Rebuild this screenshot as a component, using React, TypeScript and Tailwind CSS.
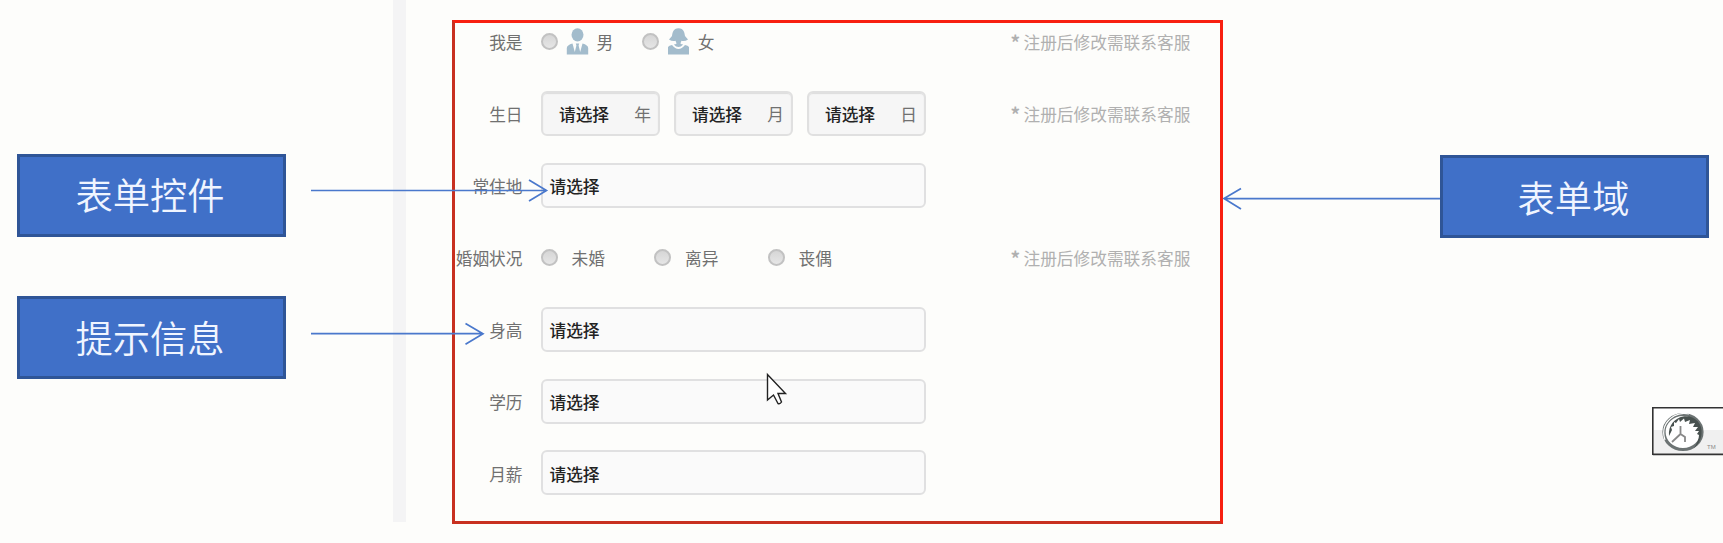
import React from "react";

const FONT = "font-['Noto_Sans_CJK_SC',sans-serif]";

function Callout({ children, className = "" }: { children: React.ReactNode; className?: string }) {
  return (
    <div className={`flex h-[83px] w-[269px] shrink-0 items-center justify-center border-[3px] border-[#2f5597] bg-[#4070c8] pr-0.5 font-['Noto_Sans_CJK_SC_DemiLight','Noto_Sans_CJK_SC',sans-serif] text-[37.3px] leading-none font-[350] text-[#f0f5ff] ${className}`}>
      {children}
    </div>
  );
}

function Row({ label, hint, children }: { label: string; hint?: boolean; children: React.ReactNode }) {
  return (
    <div className="flex h-[71.9px] items-center">
      <div className="w-[67.5px] shrink-0 pt-0.5 text-right whitespace-nowrap">{label}</div>
      <div className="ml-[18px] flex w-[385px] shrink-0 items-center">{children}</div>
      {hint && (
        <div className="ml-[85px] flex items-start gap-[5px] pt-0.5 whitespace-nowrap text-[#b0b0b0]">
          <span className="h-4 w-2 text-[19px] leading-4 font-bold">*</span>
          <span>注册后修改需联系客服</span>
        </div>
      )}
    </div>
  );
}

function Radio() {
  return <span className="size-[17px] shrink-0 rounded-full border-2 border-[#c2c2c2] bg-linear-to-b from-[#d6d6d6] to-[#e6e6e6]" />;
}

function Select() {
  return (
    <div className="flex h-[45px] w-[385px] items-center rounded-md border-2 border-[#e0e0e1] bg-[#fafafa] pt-0.5 pl-[7px] font-medium text-[#222]">
      请选择
    </div>
  );
}

function DateSelect({ unit }: { unit: string }) {
  return (
    <div className="flex h-[45px] w-[119px] items-center justify-between rounded-md border-2 border-[#e0e0e0] bg-[#f6f6f6] pt-0.5 pr-[6.5px] pl-[16.5px] shadow-[inset_0_1px_1px_#ddd]">
      <span className="font-medium text-[#222]">请选择</span>
      <span>{unit}</span>
    </div>
  );
}

function Male() {
  return (
    <svg className="ml-2 h-[27px] w-[23px]" viewBox="0 0 23 27" fill="#a3bccc">
      <ellipse cx="11.5" cy="6.8" rx="6" ry="6.6" />
      <path d="M6.5 15.5Q1 17 .8 20V26.5H22.2V20Q22 17 16.5 15.5L14.2 24L12.6 17.5L13.2 15.5H9.8L10.4 17.5L8.8 24Z" />
    </svg>
  );
}

function Female() {
  return (
    <svg className="ml-2 h-[27px] w-[23px]" viewBox="0 0 23 27" fill="#a3bccc">
      <path d="M11.5 .3C6 .3 5.5 5 5 8L2 11.5Q5 13.6 8.5 12.8L9.6 15.5Q8.5 16.5 6.8 16.5Q11.5 21.5 16.2 16.5Q14.5 16.5 13.4 15.5L14.5 12.8Q18 13.6 21 11.5L18 8C17.5 5 17 .3 11.5 .3Z" />
      <path d="M1 19Q2 17.5 5 17Q11.5 25 18 17Q21 17.5 22 19V26.5H1Z" />
    </svg>
  );
}

function Option({ text, className }: { text: string; className: string }) {
  return (
    <div className={`flex items-center ${className}`}>
      <Radio />
      <span className="ml-[14px] pt-0.5 whitespace-nowrap">{text}</span>
    </div>
  );
}

function Logo() {
  return (
    <svg className="h-[49px] w-[71px]" viewBox="0 0 71 49">
      <path d="M.8 47.4V.8H72V47.4Z" fill="#fff" />
      <path d="M2 23H71V46.6H2Z" fill="#f0f0f0" />
      <path d="M.8 .8H72M.8 0V48M.8 47.4H72" stroke="#333" strokeWidth="1.6" />
      <ellipse cx="31" cy="25" rx="19" ry="17.5" fill="#fff" stroke="#6c7373" strokeWidth="3.2" />
      <path d="M13 33Q8 18 22 9Q29 5 37 7" fill="none" stroke="#fff" strokeWidth="1.2" />
      <path d="M17 29C16 18 23 11 31 9.5C42 8 51 16 49.5 27C49 33 46 38 42 41C45 36 47 32 47 28L45 27L47 24L43 24L46 20L41 20L43 16L37 17L38 13L33 15L32 11.5L28 15L27 12L24 16L22 15L22 19L19 20L20 23Z" fill="#48514f" />
      <path d="M28.5 19V27L20 35M28.5 27L33 30V35" fill="none" stroke="#888" strokeWidth="1.8" />
      <text x="55" y="42" fontSize="6" fill="#888" fontFamily="Liberation Sans">TM</text>
    </svg>
  );
}

export default function App() {
  return (
    <main className={`relative flex h-[543px] w-[1723px] overflow-hidden bg-[#fdfdfb] text-[16.7px] leading-none text-[#707070] ${FONT}`}>
      <aside className="w-[393px] shrink-0 pl-[16.5px]">
        <Callout className="mt-[154px] pb-0.5">表单控件</Callout>
        <Callout className="mt-[58.5px] pt-0.5">提示信息</Callout>
      </aside>
      <div className="h-[522px] w-[13px] shrink-0 bg-[#f4f4f5]" />
      <section className="mt-5 ml-[46px] h-[504px] w-[771px] shrink-0 border-[3px] border-t-[#f82010] border-r-[#f82010] border-b-[#c83020] border-l-[#c83020]">
        <div className="-mt-[17.4px]">
          <Row label="我是" hint>
            <Radio /><Male /><span className="ml-2 pt-0.5">男</span>
            <span className="w-[28.5px]" />
            <Radio /><Female /><span className="ml-2 pt-0.5">女</span>
          </Row>
          <Row label="生日" hint>
            <div className="flex gap-[14px]">
              <DateSelect unit="年" />
              <DateSelect unit="月" />
              <DateSelect unit="日" />
            </div>
          </Row>
          <Row label="常住地"><Select /></Row>
          <Row label="婚姻状况" hint>
            <Option text="未婚" className="w-[113.5px]" />
            <Option text="离异" className="w-[113.5px]" />
            <Option text="丧偶" className="w-[113.5px]" />
          </Row>
          <Row label="身高"><Select /></Row>
          <Row label="学历"><Select /></Row>
          <Row label="月薪"><Select /></Row>
        </div>
      </section>
      <aside className="flex flex-1 flex-col items-end">
        <Callout className="mt-[155px] mr-[14px] pt-0.5">表单域</Callout>
        <div className="mt-[169px]"><Logo /></div>
      </aside>
      <svg className="pointer-events-none absolute inset-0" width="1723" height="543" fill="none" stroke="#4a78cc" strokeWidth="1.7">
        <path d="M311 190.5H546M529 180L546.5 190.5L529 201" />
        <path d="M311 333.7H483M465.5 323.5L483 333.7L465.5 344.2" />
        <path d="M1440 198.6H1224M1241 188.5L1224 198.6L1241 209" />
        <path d="M767.5 374.5V400L773.5 395L778 403.5Q780 404.5 781.5 402L778 393.5H785.5Z" fill="#fff" stroke="#222" strokeWidth="1.4" />
      </svg>
    </main>
  );
}
